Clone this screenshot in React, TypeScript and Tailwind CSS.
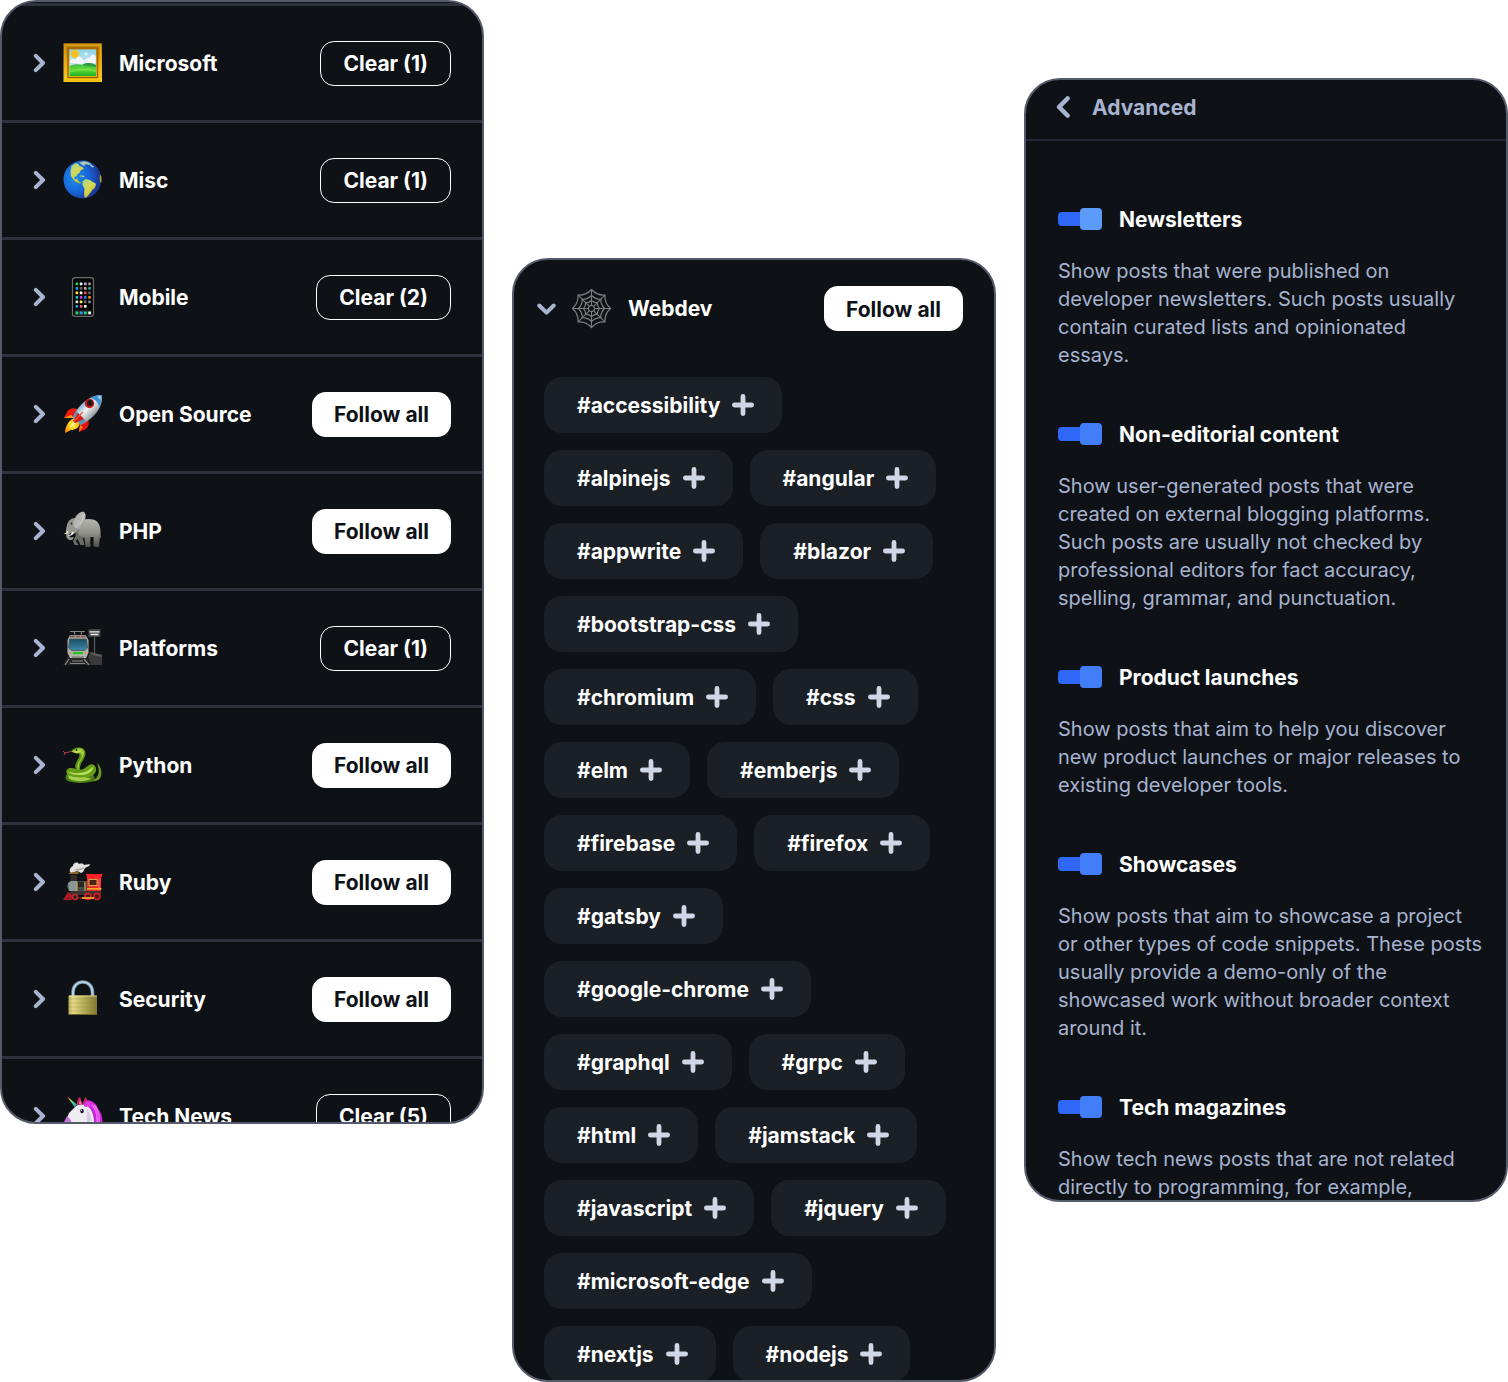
import { useState } from "react";
import type { ReactNode } from "react";

const art = "size-10 shrink-0";

function Picture() {
  return (
    <svg viewBox="0 0 40 40" className={art} aria-hidden="true">
      <defs>
        <linearGradient id="frameSide" x1="0" y1="0" x2="0" y2="1">
          <stop offset="0" stopColor="#b97a08" />
          <stop offset="0.5" stopColor="#e6a60c" />
          <stop offset="1" stopColor="#ffd41f" />
        </linearGradient>
        <linearGradient id="sky" x1="0" y1="0" x2="0" y2="1">
          <stop offset="0" stopColor="#8fd4ee" />
          <stop offset="1" stopColor="#e6f5fa" />
        </linearGradient>
        <linearGradient id="meadow" x1="0" y1="0" x2="0" y2="1">
          <stop offset="0" stopColor="#3fb54a" />
          <stop offset="0.5" stopColor="#5fd836" />
          <stop offset="1" stopColor="#1cb526" />
        </linearGradient>
      </defs>
      <rect x="0.5" y="0.5" width="38.500" height="38.500" fill="url(#frameSide)" />
      <path d="M0.5 0.5h38.500l-6 6h-26.500z" fill="#c4860c" />
      <path d="M0.5 39h38.500l-6-6h-26.500z" fill="#f8c70f" />
      <rect x="2" y="2" width="35.500" height="35.500" fill="none" stroke="#eeb81a" strokeWidth="0.800" />
      <rect x="5" y="5" width="29.500" height="29.500" fill="none" stroke="#9a5f06" strokeWidth="1.400" />
      <rect x="6.500" y="6.500" width="26.500" height="26.500" fill="url(#sky)" />
      <circle cx="12" cy="11" r="4" fill="#fbc21b" />
      <path d="M7 20c-1-4 4-5 6-3 0-4 5-5 7 0 3 0 2 4 0 4zM22 18c0-3 4-4 5-3 1-5 5-4 5.500-1v6H23z" fill="#f5f6fb" />
      <circle cx="23" cy="11" r="1.600" fill="#f1f6fb" />
      <path d="M6.500 23c4-2 9-2 13-1 5-3 9-2 13.500 0v11h-26.500z" fill="url(#meadow)" />
      <path d="M19 22c5-3 9-2 14 0v2c-5-1-10-1-14-2z" fill="#2f9a45" />
      <path d="M6.500 28c9-3 18-3 26.500-1v2c-9-2-18-2-26.500 1z" fill="#8bea4e" opacity="0.500" />
    </svg>
  );
}

function Globe() {
  return (
    <svg viewBox="0 0 40 40" className={art} aria-hidden="true">
      <defs>
        <radialGradient id="ocean" cx="0.300" cy="0.450" r="0.720">
          <stop offset="0" stopColor="#1a8ff0" />
          <stop offset="0.550" stopColor="#1763d6" />
          <stop offset="1" stopColor="#1b2c80" />
        </radialGradient>
        <linearGradient id="land" x1="0" y1="0" x2="0.600" y2="1">
          <stop offset="0" stopColor="#a9d38c" />
          <stop offset="0.500" stopColor="#cfd95c" />
          <stop offset="1" stopColor="#d9bd16" />
        </linearGradient>
      </defs>
      <circle cx="19.500" cy="19.500" r="19" fill="url(#ocean)" />
      <path d="M8.500 6l4-3 3 1 1 2 3 1 1.500 2-3 1-1.500 3-2.500 1.500-0.500 2-2 0-0.500 2 1.500 1 2-1 0.500 2.500 3 1.500-1 1-4-1.500-3-3-2-3-0.500-5z" fill="url(#land)" />
      <path d="M16 2.500l5-1.300 4 0.800 3 2-2.500 1-2.500-1-2 2-2.500-1.500zM27 4l4 2.500-1 1.200-3-2z" fill="#a5c9b4" />
      <path d="M17 15.500l3 0 2 1.500-2 0-3-0.800z" fill="#c4d66c" />
      <path d="M19.500 21.500l3-2.500 4.500 1 2.500 1.700 3.500 2-1 3.800-3 2.700-2 3-3.500 4-1.800 0.600-0.500-4.300 0.300-5-2-3.500z" fill="url(#land)" />
      <path d="M37 14l1.500 3 0 4.500-1 1.500-1-4z" fill="#a39f2b" />
    </svg>
  );
}

const appColors = [
  "#17d94a", "#ffffff", "#c9a7e8", "#9a9a9a",
  "#17a8f0", "#5f6368", "#c8b48a", "#12b5c9",
  "#ffe13a", "#ffffff", "#f0483a", "#5f5f5f",
  "#19c3d6", "#d935e0", "#1d8bf5", "#ff8a12",
  "#e9e9e9", "#f5ec52", "#666b70", "#8a8a8a",
  "#1ba0f2", "#f05a64", "#ffffff", "#050505",
];

function Phone() {
  return (
    <svg viewBox="0 0 40 40" className={art} aria-hidden="true">
      <rect x="9.500" y="0.700" width="21" height="38.600" rx="2.600" fill="#050506" stroke="#6b6e70" strokeWidth="1.200" />
      {appColors.map((color, i) => (
        <rect key={i} x={12.6 + (i % 4) * 4.2} y={5.6 + Math.floor(i / 4) * 4.5} width="2.600" height="2.600" rx="0.600" fill={color} />
      ))}
      <rect x="11.500" y="33.500" width="17" height="4.500" fill="#2b2e30" />
      {["#19d652", "#1f9df5", "#19d67a", "#f4f4f4"].map((color, i) => (
        <rect key={color} x={12.6 + i * 4.2} y="34.400" width="2.800" height="2.800" rx="0.600" fill={color} />
      ))}
    </svg>
  );
}

function Rocket() {
  return (
    <svg viewBox="0 0 40 40" className={art} aria-hidden="true">
      <defs>
        <linearGradient id="hull" x1="0.200" y1="0.200" x2="0.800" y2="0.800">
          <stop offset="0" stopColor="#3d86bd" />
          <stop offset="0.450" stopColor="#f2f5f6" />
          <stop offset="1" stopColor="#6d7378" />
        </linearGradient>
        <linearGradient id="flame" x1="1" y1="0" x2="0" y2="1">
          <stop offset="0" stopColor="#ff8a00" />
          <stop offset="0.500" stopColor="#ffe42b" />
          <stop offset="1" stopColor="#ff7a00" />
        </linearGradient>
      </defs>
      <path d="M14 15c-5-2-9 0-11 5l-2 4 10 0 5-5z" fill="#ee1c0d" />
      <path d="M1 24l7-3 3 3z" fill="#ff9a1f" />
      <path d="M25 25c2 5 0 9-4 11l-5 2 1-8z" fill="#e0130a" />
      <path d="M16 38l1-7 3 2z" fill="#ff7b1a" />
      <path d="M11 24l6 5c-1 5-5 7-9 7l-6 3c0-6 3-12 9-15z" fill="url(#flame)" />
      <path d="M11 27l2 2-7 6z" fill="#fff8b0" />
      <path d="M39 1c1 10-5 20-16 27l-5 3-8-8 3-6C19 8 28 1 39 1z" fill="url(#hull)" />
      <path d="M39 1c-5 0-9 1-12 3 5 1 8 4 9 9 2-4 3-8 3-12z" fill="#3f91cf" />
      <path d="M34 2.500l4-0.500-0.500 4z" fill="#a9d5f0" />
      <circle cx="26.500" cy="9.500" r="4.700" fill="#d01414" />
      <circle cx="27" cy="9" r="3" fill="#1d1a20" />
      <path d="M13 17l10 10-5 4-8-8z" fill="#3881b8" opacity="0.750" />
      <path d="M15 19l6 6-9 4 -2-2z" fill="#d71b10" />
      <path d="M20 18l-9 9" stroke="#ff5136" strokeWidth="1.500" />
    </svg>
  );
}

function Elephant() {
  return (
    <svg viewBox="0 0 40 40" className={art} aria-hidden="true">
      <defs>
        <linearGradient id="hide" x1="0" y1="0" x2="0" y2="1">
          <stop offset="0" stopColor="#b5b6af" />
          <stop offset="0.500" stopColor="#92928c" />
          <stop offset="1" stopColor="#4f4f4a" />
        </linearGradient>
        <linearGradient id="ear" x1="0" y1="0" x2="1" y2="1">
          <stop offset="0" stopColor="#a9a9a3" />
          <stop offset="0.600" stopColor="#b9bab3" />
          <stop offset="1" stopColor="#84847e" />
        </linearGradient>
      </defs>
      <path d="M35.500 14c2.500 4 1 9 2 13" stroke="#6c6b66" strokeWidth="1.200" fill="none" />
      <path d="M13 20h8l-1 8 1.500 6h-4l-3-6-1.500 2 2.500 4h-4l-1.500-4 2.500-5z" fill="#6a6a65" />
      <path d="M25 24l3 11h-3l-3-7zM31 24l2 11h-3z" fill="#474742" />
      <path d="M15 11c6-3.500 14-4 19-0.500 3 3 3.500 8 3 13l-1 12.500h-4.500l-1-10-3 0-0.500 10h-4.500l-1-9-6-3z" fill="url(#hide)" />
      <path d="M12 7c-4 0-7 3-8 7-0.500 3-1.500 5-1 9 0 4 2 6 5 6 2 0 3-1.500 2.500-3l-2.500 0.500c-1.500 0-2-2-1-4.500l3 1c4-1 7-5 8-10z" fill="#979791" />
      <path d="M12 7c2-4 6-7 9-6 3 2 1.500 8-1 13-2 3-5 4.500-8 2.500-2-2-2-6 0-9.500z" fill="url(#ear)" />
      <path d="M19.500 3c2 2 0 7-3 11" stroke="#d2d2cc" strokeWidth="0.900" fill="none" />
      <circle cx="8.500" cy="12.500" r="0.900" fill="#272723" />
      <path d="M4 20c0 1.500-1.500 2.500-3.500 2.500 2 1.200 5 0 5-2z" fill="#f5f2dd" />
      <path d="M9 21c0 1.500-1.500 3-4 3.500 3 0.800 6-1 5.500-3.500z" fill="#fff" />
    </svg>
  );
}

function Station() {
  return (
    <svg viewBox="0 0 40 40" className={art} aria-hidden="true">
      <defs>
        <linearGradient id="trainWindow" x1="0" y1="0" x2="0" y2="1">
          <stop offset="0" stopColor="#1a4d66" />
          <stop offset="1" stopColor="#3e8aa8" />
        </linearGradient>
      </defs>
      <path d="M5 28h18l5 9H0z" fill="#272727" />
      <path d="M6 31L2 37M21 31l5 6M9 33h11M7 35.500h15" stroke="#858585" strokeWidth="1.200" />
      <path d="M27 24l12 3v10H28l-3-8z" fill="#3a3a3a" />
      <path d="M27 24l12 3v2l-10-2z" fill="#5b5b58" />
      <path d="M31.500 9v16" stroke="#5b5b5b" strokeWidth="1.200" />
      <rect x="25.500" y="1" width="12" height="8" fill="#424242" />
      <path d="M26.500 3.800h10M27.500 6.500h8" stroke="#efefef" strokeWidth="1.300" />
      <path d="M7 3.500h15M11 3.500l1 3M19 3.500l-1 3" stroke="#858585" strokeWidth="1.200" />
      <path d="M7 7h15.500l3 5v13l-2.500 5H7l-2.500-5V12z" fill="#b3b2ad" />
      <path d="M7 7.500h15.500v2H7z" fill="#65635f" />
      <circle cx="12.500" cy="8.500" r="0.900" fill="#ff7a52" />
      <circle cx="17.500" cy="8.500" r="0.900" fill="#ff7a52" />
      <path d="M6.500 11h17l1 9-3 2.500H8.500l-3-2.500z" fill="url(#trainWindow)" stroke="#494f50" strokeWidth="0.800" />
      <rect x="10" y="24" width="10" height="2.200" fill="#1ac91e" />
      <circle cx="7.500" cy="25" r="1" fill="#e7863b" />
      <circle cx="22.500" cy="25" r="1" fill="#e7863b" />
      <path d="M9 28.500h12v1.200H9z" fill="#74726d" />
    </svg>
  );
}

function Snake() {
  return (
    <svg viewBox="0 0 40 40" className={art} aria-hidden="true">
      <path d="M32 34c4-3 5-8 2-16 5 4 6 13 2 16.500-3 2.500-8 1.500-8 1.500z" fill="#6c9c1a" />
      <path d="M8 6.500l-6 1.500-2-2M2 8l-1 2" stroke="#b8414c" strokeWidth="1" fill="none" />
      <path d="M4 29c3-3 15-5 25 0 4 3 3 7 0 7.500-7 2-20 2-25-1-2-2-2-4.500 0-6.500z" fill="#4c7e12" />
      <path d="M5 30c8 2 16 1 23 3.500-4 3.500-18 3.500-22 0z" fill="#a5cf4c" />
      <path d="M4 24.500c3-3 7-1 11 0 7 2 10-6.500 15-5 6 3 3 12.500-6 12.500-9 1-18 0-20-3-1-1.500-1-3.500 0-4.500z" fill="#679c18" />
      <path d="M5 26.500c8 3 18 2.500 25-5 1 3-3 7.500-10 8.500-7 0-13-0.500-15-3.500z" fill="#b9df58" />
      <path d="M8 6c4-4 10-4.500 13-1.500 3.500 4 0 9-2 12.500-2 3.500-3 7-1 9.500-5 0-7-3.500-5-8.500 2-4 4.500-6.500 3-9.500-3-0.500-6-0.500-8-2.500z" fill="#5d9614" />
      <path d="M10 5.500c5-3 8.500-2.500 10.500 0 2 4-2 8.500-4 12.500-1 3-1 5.500 0 7.500-3-2-3-6 0-9.500 3-5 3-7 0-8z" fill="#a3d03b" />
      <path d="M8 6.500l8-1 2 1-4 2z" fill="#c0d957" />
      <circle cx="13.500" cy="5" r="0.900" fill="#1d2b07" />
    </svg>
  );
}

function Locomotive() {
  return (
    <svg viewBox="0 0 40 40" className={art} aria-hidden="true">
      <path d="M7 10c-1-3 1-5 3-6 0-3 4-5 6-2 3-1 5 0 5 1l6-1-1 2-4 2-2 4-2 1-4-2-5 3z" fill="#e3e1de" />
      <path d="M11 8c3-2 7-1 10-3-1 4-5 2-5 4z" fill="#aaa9a7" />
      <path d="M6 11l9-2 1 3H6z" fill="#8a6427" />
      <path d="M7.500 13h6.500v7h-6.500z" fill="#342d27" />
      <path d="M5 21l3-2h18v10H6l-2-4z" fill="#444d4c" />
      <path d="M5 21l3-2h6v10H6z" fill="#899796" />
      <path d="M14 20v9M22 20v9" stroke="#d2a03e" strokeWidth="1.200" />
      <path d="M15 20h6v5h-6z" fill="#222625" />
      <path d="M24 15h14v15H24z" fill="#ee2a2c" />
      <path d="M23 12h16.500l-1 3.500H24z" fill="#ff1f26" />
      <rect x="26" y="17.500" width="8" height="6" fill="#49240f" stroke="#d7a849" />
      <path d="M36 17v11" stroke="#ff5a5c" strokeWidth="1.500" />
      <path d="M8 29h30v4H6z" fill="#3c3533" />
      <path d="M24 26h14.500v1.600H24z" fill="#f3ad29" />
      <path d="M5 30l-5 8h8l3-3z" fill="#b71920" />
      <path d="M3 36h34" stroke="#812024" strokeWidth="1.500" />
      <circle cx="12" cy="35" r="2.500" fill="#282020" stroke="#c42a30" strokeWidth="1.500" />
      <circle cx="25" cy="34.500" r="3" fill="#402020" stroke="#ed1822" strokeWidth="1.500" />
      <circle cx="34" cy="34.500" r="3" fill="#402020" stroke="#ed1822" strokeWidth="1.500" />
      <path d="M19 36h12" stroke="#efa42d" strokeWidth="1.800" />
    </svg>
  );
}

function Padlock() {
  return (
    <svg viewBox="0 0 40 40" className={art} aria-hidden="true">
      <defs>
        <linearGradient id="brass" x1="0" y1="0" x2="1" y2="0">
          <stop offset="0" stopColor="#b9ad54" />
          <stop offset="0.150" stopColor="#e3da88" />
          <stop offset="0.500" stopColor="#bdb35c" />
          <stop offset="1" stopColor="#827530" />
        </linearGradient>
      </defs>
      <path d="M10 18v-4.500C10-0.500 29.500-0.500 29.500 13.500v4.500" fill="none" stroke="#6f8798" strokeWidth="3.600" />
      <path d="M10 18v-4.500C10-0.500 29.500-0.500 29.500 13.500v4.500" fill="none" stroke="#b5d3e6" strokeWidth="2" />
      <rect x="5.500" y="16.500" width="28.500" height="19.500" rx="1" fill="url(#brass)" />
      <path d="M6 20h28M6 24h28M6 28h28M6 32h28" stroke="#8e833e" strokeWidth="0.500" opacity="0.600" />
      <path d="M6 17h28" stroke="#eee6a2" strokeWidth="0.800" />
      <path d="M6 35.500h28" stroke="#6f6428" strokeWidth="1" />
    </svg>
  );
}

function Unicorn() {
  return (
    <svg viewBox="0 0 40 40" className={art} aria-hidden="true">
      <defs>
        <linearGradient id="horn" x1="0" y1="0" x2="1" y2="1">
          <stop offset="0" stopColor="#ef4545" />
          <stop offset="0.300" stopColor="#f2d83a" />
          <stop offset="0.600" stopColor="#34d57d" />
          <stop offset="1" stopColor="#3a7df0" />
        </linearGradient>
      </defs>
      <path d="M20 6c6-5 14 1 15 7 4 4 5 10 4 16l0 9H24z" fill="#cb25dd" />
      <path d="M26 7c7 3 9 12 8 24M31 9c6 6 6 16 4 25" stroke="#f06af4" strokeWidth="1.500" fill="none" />
      <path d="M13 10c7-4 13-1 16 6 3 8 2 15 3 23H17l-2-8-6 4c-5 1-9-2-8-6l5-12z" fill="#f0ecf4" />
      <path d="M24 13c5 5 5 18 6 27h-5c0-12-2-16-1-27z" fill="#d8cddf" />
      <path d="M1 26l3-6c3 2 5 5 4 10-3 4-6 3-7-4z" fill="#c273d9" />
      <path d="M4 0.500l10 8-2 3z" fill="url(#horn)" />
      <path d="M14 9c0-5 1-7 3-8l3 8zM20 8l2-7c3 2 3 7 2 10z" fill="#c42567" />
      <path d="M16 8l1-4 2 5z" fill="#f18aa0" />
      <path d="M24 5c-3 2-4 4-2 6 3 0 5-2 8 0-1-4-3-6-6-6z" fill="#dc38e5" />
      <ellipse cx="19" cy="15" rx="1.800" ry="2.200" fill="#28192d" />
      <circle cx="18.500" cy="14.200" r="0.600" fill="#fff" />
    </svg>
  );
}

const spokes = [0, 45, 90, 135, 180, 225, 270, 315];
const webRings = [
  { r: 19, bend: 14 },
  { r: 13, bend: 10 },
  { r: 8, bend: 6.5 },
  { r: 3.2, bend: 3 },
];

function ringPath(r: number, bend: number) {
  const at = (deg: number, d: number) => {
    const a = (deg * Math.PI) / 180;
    return `${(19.5 + d * Math.sin(a)).toFixed(2)} ${(19.5 - d * Math.cos(a)).toFixed(2)}`;
  };
  return `M${at(0, r)}` + spokes.map((s) => `Q${at(s + 22.5, bend)} ${at(s + 45, r)}`).join("") + "Z";
}

function Web() {
  return (
    <svg viewBox="0 0 40 40" className={art} fill="none" stroke="#7b7d80" aria-hidden="true">
      {spokes.map((s) => (
        <path key={s} d="M19.500 16.500V0.500" strokeWidth="1" transform={`rotate(${s} 19.5 19.5)`} />
      ))}
      {webRings.map(({ r, bend }) => (
        <path key={r} d={ringPath(r, bend)} strokeWidth="1.200" />
      ))}
    </svg>
  );
}

function ChevronRight() {
  return (
    <svg viewBox="0 0 14 20" className="h-5 w-3.5 shrink-0" fill="none" stroke="#a8b3cf" strokeWidth="4" strokeLinecap="round" strokeLinejoin="round" aria-hidden="true">
      <path d="M2.800 2.800l7.200 7.200-7.200 7.200" />
    </svg>
  );
}

function ChevronDown() {
  return (
    <svg viewBox="0 0 20 14" className="h-3.5 w-5 shrink-0" fill="none" stroke="#a8b3cf" strokeWidth="4" strokeLinecap="round" strokeLinejoin="round" aria-hidden="true">
      <path d="M3.300 3.500l7.200 7.200 7.200-7.200" />
    </svg>
  );
}

function ChevronLeft() {
  return (
    <svg viewBox="0 0 14 22" className="h-[22px] w-3.5" fill="none" stroke="#a8b3cf" strokeWidth="4.600" strokeLinecap="round" strokeLinejoin="round" aria-hidden="true">
      <path d="M11.500 2.500L3.100 11l8.400 8.500" />
    </svg>
  );
}

function Plus() {
  return (
    <svg viewBox="0 0 22 22" className="size-[22px]" stroke="#cfd6e6" strokeWidth="4.800" strokeLinecap="round" aria-hidden="true">
      <path d="M11 2.400v17.200M2.400 11h17.200" />
    </svg>
  );
}

function FollowAll() {
  return (
    <button type="button" className="h-[45px] shrink-0 rounded-[14px] bg-white px-[22px] pt-0.5 text-[#0e1217]">
      Follow all
    </button>
  );
}

function Clear({ count }: { count: number }) {
  return (
    <button type="button" className="h-[45px] shrink-0 rounded-[14px] border border-white px-[22px] pt-0.5 text-white">
      Clear ({count})
    </button>
  );
}

const categories: { name: string; icon: ReactNode; followed: number }[] = [
  { name: "Microsoft", icon: <Picture />, followed: 1 },
  { name: "Misc", icon: <Globe />, followed: 1 },
  { name: "Mobile", icon: <Phone />, followed: 2 },
  { name: "Open Source", icon: <Rocket />, followed: 0 },
  { name: "PHP", icon: <Elephant />, followed: 0 },
  { name: "Platforms", icon: <Station />, followed: 1 },
  { name: "Python", icon: <Snake />, followed: 0 },
  { name: "Ruby", icon: <Locomotive />, followed: 0 },
  { name: "Security", icon: <Padlock />, followed: 0 },
  { name: "Tech News", icon: <Unicorn />, followed: 5 },
];

const tags = [
  "accessibility", "alpinejs", "angular", "appwrite", "blazor", "bootstrap-css", "chromium", "css",
  "elm", "emberjs", "firebase", "firefox", "gatsby", "google-chrome", "graphql", "grpc", "html",
  "jamstack", "javascript", "jquery", "microsoft-edge", "nextjs", "nodejs",
];

const settings = [
  {
    id: "newsletters",
    title: "Newsletters",
    text: "Show posts that were published on developer newsletters. Such posts usually contain curated lists and opinionated\nessays.",
    knob: "after:bg-[#5c9bfa]",
  },
  {
    id: "non-editorial",
    title: "Non-editorial content",
    text: "Show user-generated posts that were created on external blogging platforms.\nSuch posts are usually not checked by professional editors for fact accuracy, spelling, grammar, and punctuation.",
    knob: "after:bg-[#427ef7]",
  },
  {
    id: "launches",
    title: "Product launches",
    text: "Show posts that aim to help you discover new product launches or major releases to existing developer tools.",
    knob: "after:bg-[#427ef7]",
  },
  {
    id: "showcases",
    title: "Showcases",
    text: "Show posts that aim to showcase a project or other types of code snippets. These posts usually provide a demo-only of the showcased work without broader context around it.",
    knob: "after:bg-[#427ef7]",
  },
  {
    id: "magazines",
    title: "Tech magazines",
    text: "Show tech news posts that are not related directly to programming, for example,",
    knob: "after:bg-[#427ef7]",
  },
];

function Setting({ id, title, text, knob }: (typeof settings)[number]) {
  const [on, setOn] = useState(true);
  return (
    <div className="pb-[51px]">
      <div className="flex h-7 items-center gap-[17px]">
        <input
          id={id}
          type="checkbox"
          checked={on}
          onChange={() => setOn(!on)}
          aria-describedby={`${id}-text`}
          className={`relative h-[22px] w-11 shrink-0 appearance-none before:absolute before:inset-x-0 before:inset-y-1 before:rounded-sm before:bg-[#2f67f6] after:absolute after:top-0 after:left-0 after:size-[22px] after:rounded-sm checked:after:left-[22px] ${knob}`}
        />
        <label htmlFor={id} className="pt-0.5 leading-7 font-bold text-white">
          {title}
        </label>
      </div>
      <p id={`${id}-text`} className="mt-6 text-xl leading-7 whitespace-pre-line text-[#a8b3cf]">
        {text}
      </p>
    </div>
  );
}

const panel =
  "aspect-[484/1124] min-w-0 overflow-hidden rounded-[36px] border-2 border-[#565b6b] bg-[#0e1217]";

export default function App() {
  return (
    <main className="grid grid-cols-3 items-start gap-7 bg-white font-['Inter','Liberation_Sans',sans-serif] text-[21px]">
      <section className={`${panel} pt-px font-bold text-white`} aria-label="Categories">
        <ul>
          {categories.map(({ name, icon, followed }) => (
            <li key={name} className="flex h-[117px] items-center justify-between border-t-3 border-[#2d323c] px-[31px]">
              <button type="button" aria-expanded="false" className="flex items-center gap-4">
                <ChevronRight />
                {icon}
                <span className="pt-0.5">{name}</span>
              </button>
              {followed ? <Clear count={followed} /> : <FollowAll />}
            </li>
          ))}
        </ul>
      </section>

      <section className={`${panel} mt-[258px] pt-[26px] pr-[31px] pl-[30px] font-bold text-white`} aria-label="Webdev tags">
        <div className="-ml-2 flex items-center justify-between">
          <button type="button" aria-expanded="true" className="flex items-center gap-4">
            <ChevronDown />
            <Web />
            <span>Webdev</span>
          </button>
          <FollowAll />
        </div>
        <ul className="mt-[46px] flex flex-wrap gap-[17px]">
          {tags.map((tag) => (
            <li key={tag}>
              <button type="button" className="flex h-14 items-center gap-3 rounded-[18px] bg-[#1b1f26] pr-7 pl-[33px]">
                <span className="pt-0.5">#{tag}</span>
                <Plus />
              </button>
            </li>
          ))}
        </ul>
      </section>

      <section className={`${panel} mt-[78px]`} aria-label="Advanced settings">
        <header className="flex h-[61px] items-center gap-[22px] border-b-2 border-[#242833] pb-1.5 pl-[30px] text-[#a8b3cf]">
          <button type="button" aria-label="Back">
            <ChevronLeft />
          </button>
          <h2 className="pt-0.5 leading-7 font-bold">Advanced</h2>
        </header>
        <div className="pt-16 pr-5 pl-8">
          {settings.map((s) => (
            <Setting key={s.id} {...s} />
          ))}
        </div>
      </section>
    </main>
  );
}
